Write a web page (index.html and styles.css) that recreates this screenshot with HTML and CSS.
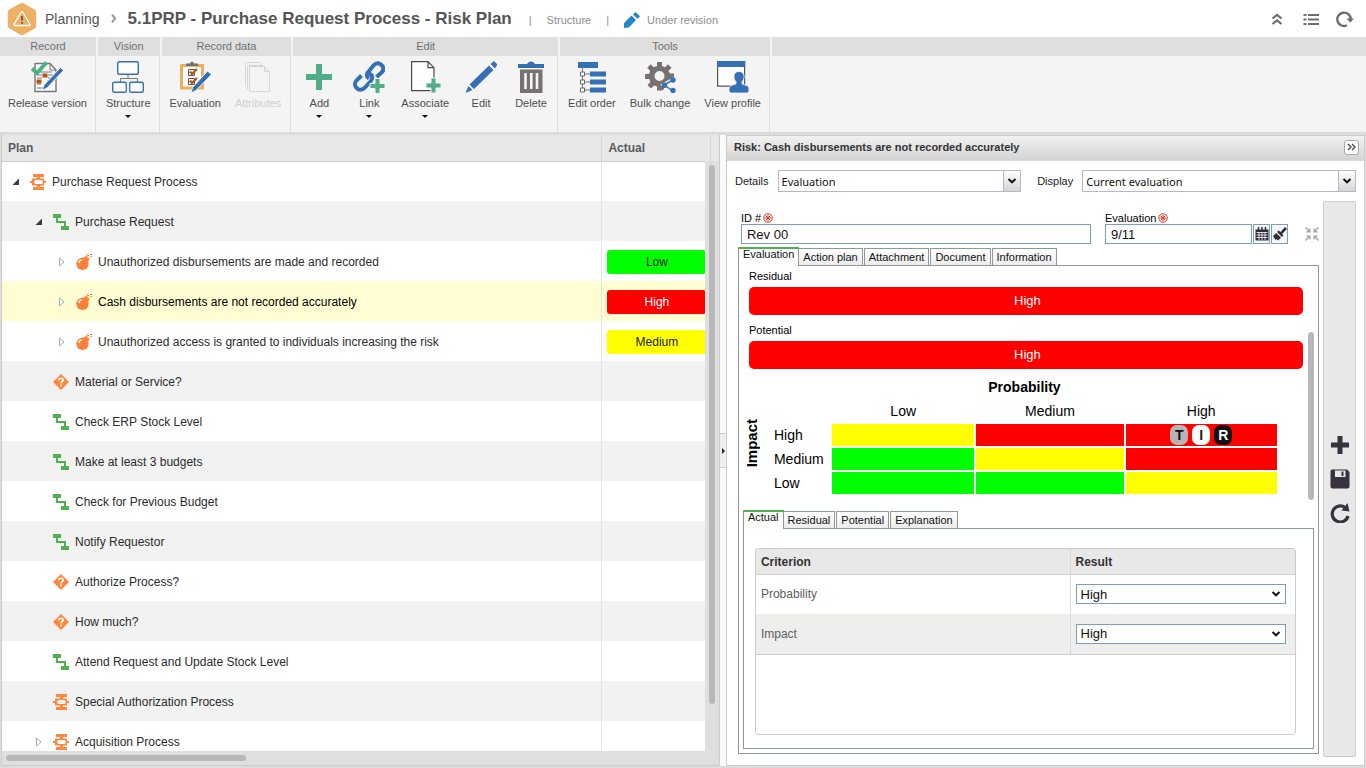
FILE: index.html
```html
<!DOCTYPE html>
<html lang="en">
<head>
<meta charset="utf-8">
<meta name="viewport" content="width=device-width, initial-scale=1">
<title>Planning - Risk Plan</title>
<link rel="stylesheet" href="styles.css">
</head>
<body>
<svg class="sprite" aria-hidden="true">
  <symbol id="i-process" viewBox="0 0 16 16"><path fill="#ff863c" fill-rule="evenodd" d="M3 0h11v3h-4v1.500h4V7h2v2h-2v2.500h-4V13h4v3H3v-3h4v-1.500H2V9H0V7h2V4.500h5V3H3zM5 6L4 8l1 2h7l1-2-1-2z"/></symbol>
  <symbol id="i-activity" viewBox="0 0 16 16"><path fill="#4eb050" d="M0 0h8v4H5v3h8v5h3v4H8v-4h3V9H3V4H0z"/></symbol>
  <symbol id="i-bomb" viewBox="0 0 16 16"><circle cx="6.500" cy="9.800" r="6.200" fill="#ff7f3a"/><path fill="#ff7f3a" d="M8 3.500l2-1.500 3.500 3.500-2 2.500z"/><path d="M10.500 4c0-2 .8-2.800 2.500-2.500M11 0v1M13 3.500v1.500M14 .5h2M14.500 2.500h1.500" stroke="#f5793a" stroke-width="1" fill="none"/><path d="M3 9c0-1.800 1-3 2.800-3" stroke="#fff" stroke-width="1.500" fill="none"/></symbol>
  <symbol id="i-decision" viewBox="0 0 16 16"><path fill="#ff863c" d="M8 0l8 8-8 8-8-8z"/><path d="M5.800 6.200C6 3.500 10.300 3.700 10 6.300 9.800 7.700 8 7.700 8 9.500" stroke="#fff" stroke-width="1.700" fill="none"/><path fill="#fff" d="M7.100 10.600H9v1.700H7.100z"/></symbol>
  <symbol id="i-open" viewBox="0 0 8 8"><path fill="#3c3a42" d="M7 .5V7H.5z"/></symbol>
  <symbol id="i-closed" viewBox="0 0 8 10"><path fill="#fff" stroke="#aaa" d="M1.500 1v8L6 5z"/></symbol>
  <symbol id="i-required" viewBox="0 0 10 10"><circle cx="5" cy="5" r="4.300" fill="#fff" stroke="#dc4436"/><path d="M5 1.500v7M1.500 5h7M2.800 2.800l4.400 4.400M7.200 2.800L2.800 7.200" stroke="#dc3528"/></symbol>
  <symbol id="i-caret" viewBox="0 0 10 6"><path d="M1.500 1L5 4.300 8.500 1" fill="none" stroke="#17151c" stroke-width="2"/></symbol>
  <symbol id="i-plus" viewBox="0 0 28 28"><path fill="#4fae86" d="M11 1h6v10h10v6H17v10h-6V17H1v-6h10z"/></symbol>
</svg>

<div class="app">
  <header class="topbar">
    <svg class="logo" viewBox="0 0 30 34" aria-hidden="true"><path fill="#edb064" d="M13 1.600q2-1 4 0l10.500 6q1.700 1 1.700 3v12.800q0 2-1.700 3L17 32.400q-2 1-4 0l-10.500-6q-1.700-1-1.700-3V10.600q0-2 1.700-3z"/><path d="M14.300 10L7 22.200q-.4 1.300.8 1.300h14.400q1.200 0 .8-1.300L15.700 10q-.7-.9-1.400 0z" fill="none" stroke="#fff" stroke-width="1.300"/><path d="M15 14v4.500M15 20v1.800" stroke="#5a4a3a" stroke-width="1.600"/></svg>
    <nav class="crumbs" aria-label="Breadcrumb">
      <a class="crumb" href="#">Planning</a>
      <svg class="chev" viewBox="0 0 6 9" aria-hidden="true"><path d="M1 .5l3 4-3 4" fill="none" stroke="#999" stroke-width="2"/></svg>
      <h1 class="title">5.1PRP - Purchase Request Process - Risk Plan</h1>
    </nav>
    <div class="meta">
      <span class="bar">|</span><span class="meta-text">Structure</span><span class="bar">|</span>
      <span class="status"><svg class="status-icon" viewBox="0 0 16 16" aria-hidden="true"><path fill="#2385cb" d="M0 11l7.500-7.500 4.500 4.500L4.800 15.500 0 16zM9 2.500L11.500 0 16 4.300 13.500 6.700z"/><path d="M8.300 3.200l4.500 4.300" stroke="#fff" stroke-width="1"/></svg>Under revision</span>
    </div>
    <div class="top-actions">
      <button class="icon-btn" aria-label="Collapse ribbon"><svg viewBox="0 0 18 18"><path d="M4.500 8.500L9 4.800l4.500 3.700M4.500 14L9 10.300l4.500 3.700" fill="none" stroke="#706c6b" stroke-width="2.200"/></svg></button>
      <button class="icon-btn" aria-label="List"><svg viewBox="0 0 18 18"><path d="M1.500 5h3M6 5h11M1.500 9.500h3M6 9.500h11M1.500 14h3M6 14h11" stroke="#706c6b" stroke-width="2"/></svg></button>
      <button class="icon-btn" aria-label="Refresh"><svg viewBox="0 0 18 18"><path d="M11 15.300A6.700 6.700 0 1 1 14.700 9" fill="none" stroke="#706c6b" stroke-width="2.400"/><path fill="#706c6b" d="M10.500 8.500H18l-3.700 4z"/></svg></button>
    </div>
  </header>

  <section class="ribbon" aria-label="Toolbar">
    <div class="group">
      <h2 class="group-title">Record</h2>
      <div class="group-body">
        <button class="tool"><svg class="tool-icon" viewBox="0 0 32 32"><path d="M4 2v28.500h21V9l-6-6.500H4z" fill="#fafafa" stroke="#777" stroke-width="1.400"/><path d="M19 2.500V9h6" fill="none" stroke="#777"/><path d="M6 14h5M6 17h5M17 14h5M17 17h4M6 20h4M6 23h4M6 27h7M16 20h3M6 11h15" stroke="#777"/><path fill="#b9500f" d="M11.500 12.500h5v4h-5zM5.500 18.500h5v4h-5z"/><path d="M1 7.500l5 4.500L15.500 1.500" fill="none" stroke="#4fae86" stroke-width="4"/><path fill="#3570b5" stroke="#f4f4f4" d="M29.500 6.500l3 3L16 27l-5 2.500 2-5.500z"/></svg><span>Release version</span></button>
      </div>
    </div>
    <div class="group">
      <h2 class="group-title">Vision</h2>
      <div class="group-body">
        <button class="tool"><svg class="tool-icon" viewBox="0 0 32 32"><path d="M16 13v5M8.500 21v-3.500h17V21" fill="none" stroke="#777"/><g fill="#fff" stroke="#3570b5" stroke-width="1.400"><rect x="5.700" y=".7" width="20.600" height="12.600" rx="1.500"/><rect x=".7" y="21.200" width="13.600" height="10" rx="1.500"/><rect x="17.700" y="21.200" width="13.600" height="10" rx="1.500"/></g></svg><span>Structure</span><i class="drop"></i></button>
      </div>
    </div>
    <div class="group">
      <h2 class="group-title">Record data</h2>
      <div class="group-body wide">
        <button class="tool"><svg class="tool-icon" viewBox="0 0 32 32"><path d="M2.500 4.500h21V27h-21z" fill="#fff" stroke="#ecae5d" stroke-width="3"/><path fill="#777170" d="M7 5V2.500h4q2-4 4 0h4V5z"/><path d="M9.500 8.500h6v6h-6zM9.500 17.500h6v6h-6z" fill="#fff" stroke="#555"/><path d="M11 10.500l2 2.500 5-5M11 19.500l2 2.500 5-5" fill="none" stroke="#b9500f" stroke-width="2.200"/><path fill="#3570b5" stroke="#f4f4f4" d="M28.500 10l4 3.500L17 29.500 12 32l1.500-5.500z"/></svg><span>Evaluation</span></button>
        <button class="tool" disabled><svg class="tool-icon" viewBox="0 0 32 32"><g fill="#f4f4f4" stroke="#d6d6d6"><path d="M3.500 25.500v-24h14l5 5"/><path d="M5.500 28.500v-24h14l5 5"/><path d="M7.500 5.500h15l5 5v20h-20zM22.500 5.500v5h5"/></g></svg><span>Attributes</span></button>
      </div>
    </div>
    <div class="group">
      <h2 class="group-title">Edit</h2>
      <div class="group-body">
        <button class="tool"><svg class="tool-icon" viewBox="0 0 32 32"><use href="#i-plus" x="2" y="2" width="28" height="28"/></svg><span>Add</span><i class="drop"></i></button>
        <button class="tool"><svg class="tool-icon" viewBox="0 0 32 32"><g fill="none" stroke="#3570b5" stroke-width="4"><path d="M16 17.500c-3-2-3-5 0-7.500l4.500-5.500c3-3.500 6.500-2.500 8.500 0s2 5-1 7.500l-4.500 4"/><path d="M15.500 12.500c4.500 1 4.500 5 2 8l-5 5.500c-3.500 4-7 3-9 .8s-2.200-5.300.5-7.800l4.500-4.500"/></g><path fill="#4fae86" stroke="#f4f4f4" d="M22 17.500h5v5h5v5h-5v5h-5v-5h-5v-5h5z"/></svg><span>Link</span><i class="drop"></i></button>
        <button class="tool"><svg class="tool-icon" viewBox="0 0 32 32"><path d="M2.600.7h16.400l6 6v23H2.600zM19 .7v6h6" fill="#fff" stroke="#4b4b4b" stroke-width="1.200"/><path fill="#4fae86" stroke="#f4f4f4" d="M22 17h5v5h5v5h-5v5h-5v-5h-5v-5h5z"/></svg><span>Associate</span><i class="drop"></i></button>
        <button class="tool"><svg class="tool-icon" viewBox="0 0 32 32"><path fill="#3570b5" d="M24 4.500l4.500 4.500L9 28l-4.500-4.500zM25.500 3L29 0l3.500 3.500L30 7.500zM3.300 25l4.200 4-7 3z"/></svg><span>Edit</span></button>
        <button class="tool"><svg class="tool-icon" viewBox="0 0 32 32"><path fill="#3570b5" d="M3 3h9q1-2.500 4-2.500T20 3h9v4H3z"/><path fill="#777170" d="M5 8.500h22.500V32H5z"/><path d="M10.500 12v16M16.300 12v16M22 12v16" stroke="#f4f4f4" stroke-width="2.600"/></svg><span>Delete</span></button>
      </div>
    </div>
    <div class="group">
      <h2 class="group-title">Tools</h2>
      <div class="group-body">
        <button class="tool"><svg class="tool-icon" viewBox="0 0 32 32"><path d="M6.500 6v24M6.500 13H14M6.500 21H14M6.500 29H14" stroke="#777" fill="none"/><path fill="#3570b5" d="M2 1h20v6H2zM14 10.500h16v5H14zM14 18.500h16v5H14zM14 26.500h16v5H14z"/><path d="M4.500 11h4v4h-4zM4.500 19h4v4h-4zM4.500 27h4v4h-4z" fill="#fff" stroke="#666"/></svg><span>Edit order</span></button>
        <button class="tool"><svg class="tool-icon" viewBox="0 0 32 32"><path fill="#777170" fill-rule="evenodd" d="M13 1h5v4l3 1.200 3-3 3.500 3.500-3 3L26 12.500h4V16L20 22v6l-2 1.500h-5v-4l-3-1-3 3-3.500-3.500 3-3L5 18H1v-5h4l1.200-3.300-3-3L6.700 3.200l3 3L13 5zM15.500 10a5 5 0 1 0 0 10 5 5 0 0 0 0-10z"/><path d="M29 19l-9 5 9 6" fill="none" stroke="#f4f4f4" stroke-width="4"/><path d="M29 19l-9 5 9 6" fill="none" stroke="#3570b5" stroke-width="1.500"/><g fill="#3570b5"><circle cx="29" cy="19" r="2.700"/><circle cx="20.500" cy="24.300" r="2.700"/><circle cx="29" cy="29.500" r="2.700"/></g></svg><span>Bulk change</span></button>
        <button class="tool"><svg class="tool-icon" viewBox="0 0 32 32"><path d="M.6.600h27v24.500H.6z" fill="#fff" stroke="#555" stroke-width="1.200"/><path fill="#3570b5" d="M0 0h28.200v6H0z"/><path fill="#3570b5" stroke="#fff" stroke-width=".8" d="M22 10.500c3.500 0 5.500 2.500 5 6-.2 2-1 3.300-2 4.300v2l5.500 2q1.500 1 1.500 3V30q0 2-2 2H14q-2 0-2-2v-2.200q0-2 1.500-3l5.500-2v-2c-1-1-1.800-2.300-2-4.300-.5-3.500 1.500-6 5-6z"/></svg><span>View profile</span></button>
      </div>
    </div>
    <div class="group group-rest"><div class="group-title"></div></div>
  </section>

  <main class="workspace">
    <section class="tree-panel" aria-label="Plan">
      <div class="tree-view">
        <table class="tree">
          <colgroup><col><col class="col-actual"><col class="col-more"></colgroup>
          <thead><tr><th>Plan</th><th>Actual</th><th></th></tr></thead>
          <tbody>
            <tr><td><div class="node lv0"><svg class="exp open"><use href="#i-open"/></svg><svg class="ico"><use href="#i-process"/></svg>Purchase Request Process</div></td><td></td><td></td></tr>
            <tr><td><div class="node lv1"><svg class="exp open"><use href="#i-open"/></svg><svg class="ico"><use href="#i-activity"/></svg>Purchase Request</div></td><td></td><td></td></tr>
            <tr><td><div class="node lv2"><svg class="exp"><use href="#i-closed"/></svg><svg class="ico"><use href="#i-bomb"/></svg>Unauthorized disbursements are made and recorded</div></td><td><div class="level low">Low</div></td><td></td></tr>
            <tr class="selected"><td><div class="node lv2"><svg class="exp"><use href="#i-closed"/></svg><svg class="ico"><use href="#i-bomb"/></svg>Cash disbursements are not recorded accurately</div></td><td><div class="level high">High</div></td><td></td></tr>
            <tr><td><div class="node lv2"><svg class="exp"><use href="#i-closed"/></svg><svg class="ico"><use href="#i-bomb"/></svg>Unauthorized access is granted to individuals increasing the risk</div></td><td><div class="level medium">Medium</div></td><td></td></tr>
            <tr><td><div class="node lv1"><span class="exp"></span><svg class="ico"><use href="#i-decision"/></svg>Material or Service?</div></td><td></td><td></td></tr>
            <tr><td><div class="node lv1"><span class="exp"></span><svg class="ico"><use href="#i-activity"/></svg>Check ERP Stock Level</div></td><td></td><td></td></tr>
            <tr><td><div class="node lv1"><span class="exp"></span><svg class="ico"><use href="#i-activity"/></svg>Make at least 3 budgets</div></td><td></td><td></td></tr>
            <tr><td><div class="node lv1"><span class="exp"></span><svg class="ico"><use href="#i-activity"/></svg>Check for Previous Budget</div></td><td></td><td></td></tr>
            <tr><td><div class="node lv1"><span class="exp"></span><svg class="ico"><use href="#i-activity"/></svg>Notify Requestor</div></td><td></td><td></td></tr>
            <tr><td><div class="node lv1"><span class="exp"></span><svg class="ico"><use href="#i-decision"/></svg>Authorize Process?</div></td><td></td><td></td></tr>
            <tr><td><div class="node lv1"><span class="exp"></span><svg class="ico"><use href="#i-decision"/></svg>How much?</div></td><td></td><td></td></tr>
            <tr><td><div class="node lv1"><span class="exp"></span><svg class="ico"><use href="#i-activity"/></svg>Attend Request and Update Stock Level</div></td><td></td><td></td></tr>
            <tr><td><div class="node lv1"><span class="exp"></span><svg class="ico"><use href="#i-process"/></svg>Special Authorization Process</div></td><td></td><td></td></tr>
            <tr><td><div class="node lv1"><svg class="exp"><use href="#i-closed"/></svg><svg class="ico"><use href="#i-process"/></svg>Acquisition Process</div></td><td></td><td></td></tr>
          </tbody>
        </table>
        <div class="vscroll"><div class="vthumb"></div></div>
      </div>
      <div class="hscroll"><div class="hthumb"></div></div>
    </section>

    <div class="splitter"><button class="split-handle" aria-label="Resize panels"></button></div>

    <section class="detail" aria-label="Risk details">
      <header class="detail-head">
        <h2 class="detail-title">Risk: Cash disbursements are not recorded accurately</h2>
        <button class="hide-btn" aria-label="Hide panel"><svg viewBox="0 0 9 8"><path d="M1 1l3 3-3 3M5 1l3 3-3 3" fill="none" stroke="#444" stroke-width="1.300"/></svg></button>
      </header>
      <div class="filters">
        <label for="details">Details</label>
        <div class="combo combo-a"><select id="details"><option>Evaluation</option></select><span class="combo-arrow"><svg viewBox="0 0 10 6"><use href="#i-caret"/></svg></span></div>
        <label for="display">Display</label>
        <div class="combo combo-b"><select id="display"><option>Current evaluation</option></select><span class="combo-arrow"><svg viewBox="0 0 10 6"><use href="#i-caret"/></svg></span></div>
      </div>
      <div class="detail-body">
        <div class="record">
          <div class="fields">
            <div class="field"><label for="rev">ID #<svg class="req"><use href="#i-required"/></svg></label><input id="rev" class="text" type="text" value="Rev 00"></div>
            <div class="field">
              <label for="evaldate">Evaluation<svg class="req"><use href="#i-required"/></svg></label>
              <div class="date">
                <input id="evaldate" class="text" type="text" value="9/11">
                <button class="date-btn" aria-label="Open calendar"><svg viewBox="0 0 14 14"><path fill="#302e38" d="M.5 2.500h13v11H.5z"/><path d="M3.500 0v3M7 0v3M10.500 0v3" stroke="#302e38" stroke-width="1.500"/><path d="M1.500 5.500h11M1.500 8h11M1.500 10.500h11M4 5v8M7 5v8M10 5v8" stroke="#fff" stroke-width=".8"/></svg></button>
                <button class="date-btn" aria-label="Clear date"><svg viewBox="0 0 14 14"><path fill="#302e38" d="M12 0l2 2-5 5 1.500 1.500L9 10 4 5l1.500-1.500L7.500 5zM3.300 6l4.700 4.700L5 13.500 3.500 12l-1 1L0 9z"/></svg></button>
              </div>
            </div>
            <button class="shrink" aria-label="Shrink"><svg viewBox="0 0 14 14"><path d="M.5.500l4 4M1.500 4.800h3.300V1.500M13.500.500l-4 4M12.500 4.800H9.200V1.500M.5 13.500l4-4M1.500 9.200h3.300v3.300M13.500 13.500l-4-4M12.500 9.200H9.200v3.300" fill="none" stroke="#999fa3" stroke-width="1.200"/></svg></button>
          </div>

          <div class="tabs" role="tablist">
            <button class="tab active" role="tab" aria-selected="true">Evaluation</button><button class="tab" role="tab">Action plan</button><button class="tab" role="tab">Attachment</button><button class="tab" role="tab">Document</button><button class="tab" role="tab">Information</button>
          </div>
          <div class="pane">
            <div class="summary">
              <div class="caption">Residual</div>
              <div class="result">High</div>
              <div class="caption">Potential</div>
              <div class="result">High</div>
              <table class="matrix">
                <colgroup><col class="m-axis"><col class="m-label"><col class="m-low"><col class="m-medium"><col class="m-high"></colgroup>
                <tbody>
                  <tr class="m-title"><td></td><td></td><th colspan="3">Probability</th></tr>
                  <tr class="m-heads"><th rowspan="4" class="axis"><span>Impact</span></th><td></td><th>Low</th><th>Medium</th><th>High</th></tr>
                  <tr><th class="m-row">High</th><td class="medium"></td><td class="high"></td><td class="high"><div class="marks"><span class="mark t">T</span><span class="mark i">I</span><span class="mark r">R</span></div></td></tr>
                  <tr><th class="m-row">Medium</th><td class="low"></td><td class="medium"></td><td class="high"></td></tr>
                  <tr><th class="m-row">Low</th><td class="low"></td><td class="low"></td><td class="medium"></td></tr>
                </tbody>
              </table>
              <div class="pane-thumb"></div>
            </div>
            <div class="tabs" role="tablist">
              <button class="tab active" role="tab" aria-selected="true">Actual</button><button class="tab" role="tab">Residual</button><button class="tab" role="tab">Potential</button><button class="tab" role="tab">Explanation</button>
            </div>
            <div class="subpane">
              <div class="criteria-box">
                <table class="criteria">
                  <colgroup><col><col class="c-result"></colgroup>
                  <thead><tr><th>Criterion</th><th>Result</th></tr></thead>
                  <tbody>
                    <tr><td><label for="c-prob">Probability</label></td><td><div class="pick"><select id="c-prob"><option>High</option></select><svg><use href="#i-caret"/></svg></div></td></tr>
                    <tr><td><label for="c-imp">Impact</label></td><td><div class="pick"><select id="c-imp"><option>High</option></select><svg><use href="#i-caret"/></svg></div></td></tr>
                  </tbody>
                </table>
              </div>
            </div>
          </div>
        </div>
        <aside class="rail">
          <button aria-label="New"><svg viewBox="0 0 20 20"><path fill="#37333f" d="M7.500 1h5v6.500H19v5h-6.500V19h-5v-6.500H1v-5h6.500z"/></svg></button>
          <button aria-label="Save"><svg viewBox="0 0 20 20"><path fill="#37333f" d="M2 .5h15L19.500 3v14.500q0 2-2 2h-15q-2 0-2-2V2.500Q.5.500 2 .5z"/><path fill="#e8e8e8" d="M5 1.500h10.500V8H5z"/><path fill="#37333f" d="M11.500 2.500h2V7h-2z"/></svg></button>
          <button aria-label="Reload"><svg viewBox="0 0 20 20"><path d="M15 4.500A8 8 0 1 0 18 13" fill="none" stroke="#37333f" stroke-width="3.200"/><path fill="#37333f" d="M17.500 0l2 8.500-8-1z"/></svg></button>
        </aside>
      </div>
    </section>
  </main>
</div>
</body>
</html>
```

FILE: styles.css
```css
* { box-sizing: border-box; }
body {
  margin: 0;
  font-family: "Liberation Sans", Arial, sans-serif;
  font-size: 11px;
  color: #222;
  background: #dcdcdc;
}
button, select, input { font: inherit; color: inherit; margin: 0; border-radius: 0; }
button { padding: 0; border: 0; background: none; }
h1, h2 { margin: 0; }
svg { display: block; flex: none; }
.sprite { position: absolute; width: 0; height: 0; }

.app { display: flex; flex-direction: column; height: 100vh; }

/* Top bar */
.topbar { display: flex; align-items: center; height: 37px; flex: none; padding: 0 12px 0 7px; background: #fff; }
.logo { width: 30px; height: 34px; }
.crumbs { display: flex; align-items: center; margin-left: 8px; }
.crumb { font-size: 14px; color: #555; text-decoration: none; }
.chev { width: 6px; height: 9px; margin: 0 11px; }
.title { font-size: 17px; line-height: 20px; font-weight: bold; color: #555; white-space: nowrap; }
.meta { display: flex; align-items: center; gap: 15px; margin: 3px 0 0 17px; color: #8e8e8e; }
.status { display: flex; align-items: center; gap: 7px; }
.status-icon { width: 16px; height: 16px; }
.top-actions { display: flex; gap: 16px; margin-left: auto; }
.icon-btn svg { width: 18px; height: 18px; }

/* Ribbon */
.ribbon { display: flex; flex: none; gap: 2px; height: 96px; background: #f4f4f4; border-bottom: 1px solid #d9d9d9; }
.group { display: flex; flex-direction: column; flex: none; }
.group-title { height: 19px; line-height: 19px; font-size: 11px; font-weight: normal; text-align: center; color: #707070; background: #dfdfdf; }
.group-body { display: flex; flex: 1; padding: 4px 1px 0; border-right: 1px solid #dcdcdc; }
.group-body.wide { padding-right: 2px; }
.group-rest { flex: 1; }
.tool { display: flex; flex-direction: column; align-items: center; justify-content: flex-start; min-width: 50px; padding: 1px 7px 0; color: #4e4e4e; }
.tool span { margin-top: 4px; line-height: 13px; white-space: nowrap; }
.tool:disabled { color: #cfcfcf; }
.tool-icon { width: 32px; height: 32px; }
.drop { width: 0; height: 0; margin-top: 5px; border: 3px solid transparent; border-top-color: #111; border-bottom: 0; }

/* Workspace */
.workspace { display: grid; flex: 1; min-height: 0; grid-template-columns: minmax(0, 9fr) 6px minmax(0, 8fr); padding: 2px 1px; }
.tree-panel { display: flex; flex-direction: column; min-height: 0; border-left: 1px solid #ccc; border-right: 1px solid #ccc; border-bottom: 1px solid #ccc; background: #fff; }
.tree-view { position: relative; flex: 1; min-height: 0; overflow: hidden; }
.tree { width: 100%; table-layout: fixed; border-collapse: collapse; font-size: 12px; }
.col-actual { width: 109px; }
.col-more { width: 8px; }
.tree th { height: 26px; padding: 0 6px; text-align: left; color: #5a5a5a; background: #e8e8e8; border-bottom: 1px solid #ccc; border-right: 1px solid #d6d6d6; }
.tree th:last-child, .tree td:last-child { padding: 0; border-right: 0; }
.tree td { height: 40px; padding: 2px 0 0 5px; border-right: 1px solid #e4e4e4; }
.tree td:first-child { padding: 2px 0 0; }
.tree tbody tr:nth-child(even) { background: #f2f2f2; }
.tree tbody tr.selected { background: #fefed2; color: #000; }
.node { display: flex; align-items: center; color: #2b2b2b; white-space: nowrap; }
.selected .node { color: #000; }
.lv0 { padding-left: 10px; }
.lv1 { padding-left: 33px; }
.lv2 { padding-left: 56px; }
.exp { width: 8px; height: 10px; margin-right: 10px; flex: none; }
.exp.open { height: 8px; }
.ico { width: 16px; height: 16px; margin-right: 6px; }
.level { width: 99px; height: 24px; line-height: 24px; text-align: center; border-radius: 3px; }
.low { background: #0f0; color: #222; }
.medium { background: #ff0; color: #222; }
.high { background: #f00; color: #fff; }
.vscroll { position: absolute; top: 26px; right: 0; bottom: 0; width: 14px; padding: 4px 4px 0; background: #dfdfdf; }
.vthumb { height: 92%; border-radius: 3px; background: #b8b8b8; }
.hscroll { height: 14px; flex: none; padding: 4px; background: #dfdfdf; }
.hthumb { width: 240px; height: 6px; border-radius: 3px; background: #b8b8b8; }

.splitter { display: flex; align-items: center; background: #fafafa; }
.split-handle { display: flex; width: 6px; height: 35px; padding-left: 2px; align-items: center; background: #eee; border: 1px solid #ccc; border-width: 1px 0; }
.split-handle::after { content: ""; border: 3px solid transparent; border-left-color: #222; border-right: 0; }

/* Detail panel */
.detail { display: flex; flex-direction: column; min-height: 0; border: 1px solid #ccc; background: #fff; }
.detail-head { display: flex; align-items: center; justify-content: space-between; height: 25px; flex: none; padding: 0 5px 2px 7px; background: linear-gradient(#f2f2f2, #d4d4d4); border-bottom: 1px solid #d6d6d6; }
.detail-title { font-size: 11px; color: #333; white-space: nowrap; }
.hide-btn { display: grid; place-items: center; width: 15px; height: 15px; border: 1px solid #aaa; border-radius: 3px; background: #fff; }
.hide-btn svg { width: 9px; height: 8px; }
.filters { display: flex; align-items: center; flex: none; gap: 9px; padding: 9px 8px 0; }
.combo { display: grid; min-width: 0; height: 22px; border: 1px solid #b5b8c8; font-family: "Noto Sans", sans-serif; }
.combo-a { flex: 8 1 0; margin-right: 7px; }
.combo-b { flex: 9 1 0; }
.combo select, .combo-arrow { grid-area: 1 / 1; }
.combo select { width: 100%; padding: 0 3px; border: 0; appearance: none; background: #fff; font-size: 11px; color: #111; }
.combo-arrow { display: grid; justify-self: end; place-items: center; width: 17px; pointer-events: none; border-left: 1px solid #b5b8c8; background: linear-gradient(#fff, #d6d6d6); }
.combo-arrow svg { width: 10px; height: 6px; }

.detail-body { display: flex; flex: 1; min-height: 0; gap: 4px; padding: 9px 8px 8px 11px; }
.record { display: flex; flex-direction: column; flex: 1; min-width: 0; padding-bottom: 3px; }
.fields { display: grid; grid-template-columns: minmax(0, 1fr) 183px 17px; column-gap: 14px; align-items: end; padding: 10px 0 3px 3px; }
.field label { display: flex; align-items: center; gap: 2px; height: 13px; color: #000; }
.req { width: 10px; height: 10px; }
.text { display: block; width: 100%; min-width: 0; height: 20px; padding: 0 5px; border: 1px solid #7b9ebd; background: #fff; font-size: 13px; color: #111; }
.date { display: flex; gap: 1px; }
.date-btn { display: grid; flex: none; place-items: center; width: 17px; height: 20px; border: 1px solid #7b9ebd; background: #f6f6f6; }
.date-btn svg { width: 14px; height: 14px; }
.shrink { display: flex; justify-content: flex-end; padding-bottom: 3px; }
.shrink svg { width: 14px; height: 14px; }

.tabs { display: flex; align-items: flex-end; gap: 1px; height: 18px; flex: none; }
.tab { height: 17px; padding: 0 4px 1px; line-height: 14px; color: #111; border: 1px solid #8f9a98; border-bottom: 0; background: linear-gradient(#fff, #ececec); white-space: nowrap; }
.tab.active { z-index: 1; height: 19px; margin-bottom: -1px; margin-right: -2px; padding-bottom: 7px; line-height: 10px; border-top: 2px solid #4eb050; background: #fff; }
.pane { display: flex; flex-direction: column; flex: 1; min-height: 0; padding: 0 4px 4px; border: 1px solid #8f9a98; }
.summary { position: relative; height: 244px; flex: none; padding: 4px 11px 0 6px; color: #000; }
.caption { height: 13px; line-height: 13px; }
.result { height: 28px; margin: 4px 0 9px; padding-left: 3px; line-height: 28px; font-size: 13px; text-align: center; color: #fff; background: #f00; border-radius: 5px; }
.matrix { width: calc(100% - 16px); margin: -4px 0 0 -8px; table-layout: fixed; border-collapse: separate; border-spacing: 2px; font-size: 14px; }
.matrix th, .matrix td { padding: 0; height: 22px; line-height: 22px; }
.matrix th { font-weight: normal; }
.matrix tr.m-title th { font-weight: bold; padding-right: 60px; }
.m-axis { width: 22px; }
.m-label { width: 63px; }
.m-low { width: 32%; }
.m-medium { width: 33%; }
.m-high { width: 34%; }
.matrix th.m-row { padding-left: 7px; padding-top: 1px; line-height: 21px; text-align: left; }
.matrix th.axis { padding: 0 5px 8px 0; font-size: 15px; line-height: 17px; font-weight: bold; }
.axis span { display: inline-block; writing-mode: vertical-rl; transform: rotate(180deg); vertical-align: middle; }
.marks { display: flex; justify-content: center; gap: 4px; }
.mark { width: 18px; height: 20px; line-height: 20px; border-radius: 7px; font-weight: bold; text-align: center; }
.mark.t { background: #b5b5b5; color: #111; }
.mark.i { background: #fff; color: #222; }
.mark.r { background: #111; color: #fff; }
.pane-thumb { position: absolute; top: 66px; right: 0; bottom: 10px; width: 6px; border-radius: 3px; background: #b8b8b8; }

.subpane { display: flex; flex: 1; min-height: 0; padding: 19px 17px 13px 11px; border: 1px solid #8f9a98; }
.criteria-box { flex: 1; overflow: hidden; border: 1px solid #ccc; border-radius: 3px; }
.criteria { width: 100%; table-layout: fixed; border-collapse: collapse; font-size: 12px; }
.c-result { width: 225px; }
.criteria th, .criteria td { padding: 0 5px; text-align: left; border-right: 1px solid #d9d9d9; }
.criteria th:last-child, .criteria td:last-child { border-right: 0; padding-right: 9px; }
.criteria th { height: 25px; padding-top: 1px; color: #333; background: #e8e8e8; border-bottom: 1px solid #d0d0d0; }
.criteria td { height: 40px; color: #606060; }
.criteria tbody tr:last-child { background: #eeeeed; border-bottom: 1px solid #ccc; }
.pick { display: grid; align-items: center; }
.pick select, .pick svg { grid-area: 1 / 1; }
.pick select { width: 100%; height: 20px; padding: 0 4px; appearance: none; border: 1px solid #7b9ebd; background: #fff; font-size: 13px; color: #111; }
.pick svg { justify-self: end; width: 10px; height: 6px; margin-right: 5px; pointer-events: none; }

.rail { display: flex; flex-direction: column; align-items: center; justify-content: center; gap: 14px; width: 33px; flex: none; border: 1px solid #ccc; border-radius: 2px; background: #e8e8e8; }
.rail svg { width: 20px; height: 20px; }
```
